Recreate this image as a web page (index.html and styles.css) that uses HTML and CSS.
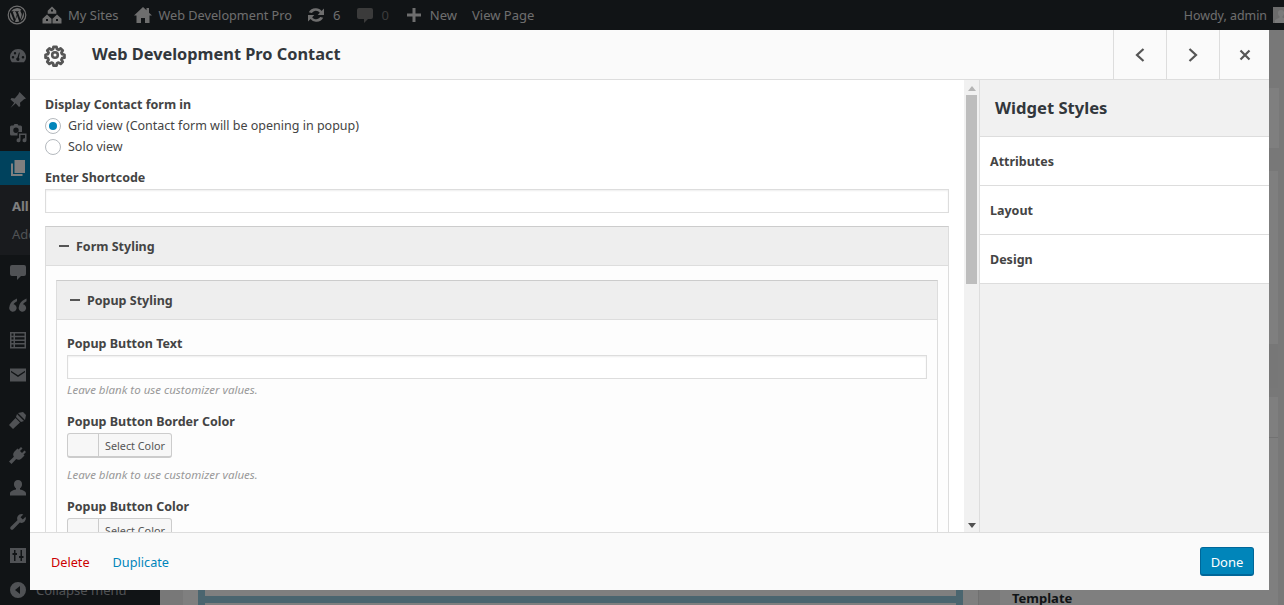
FILE: index.html
```html
<!DOCTYPE html>
<html lang="en">
<head>
<meta charset="utf-8">
<title>Web Development Pro Contact</title>
<link rel="stylesheet" href="styles.css">
</head>
<body>
<header class="adminbar">
  <svg class="ab-wp" viewBox="0 0 20 20"><circle cx="10" cy="10" r="8.800" fill="none" stroke="currentColor" stroke-width="1.200"/><path d="M3 10c0 2.800 1.600 5.200 4 6.300L3.600 7.200A7 7 0 0 0 3 10zm11.700-.3c0-.9-.3-1.500-.6-2-.3-.6-.7-1.100-.7-1.700 0-.6.500-1.200 1.200-1.200h.1A7 7 0 0 0 4.200 6.300h.5c.7 0 1.900-.1 1.900-.1.400 0 .4.500 0 .6 0 0-.4 0-.8.100l2.500 7.400 1.500-4.500-1.100-2.900-.7-.1c-.4 0-.3-.6 0-.6 0 0 1.100.1 1.800.1s1.900-.1 1.900-.1c.4 0 .4.500 0 .6 0 0-.4 0-.8.100l2.500 7.300.7-2.300c.3-.9.5-1.600.5-2.200zM10.100 10.700 8 16.700a7 7 0 0 0 4.300-.1l-.1-.1zm6-3.900c0 .2.100.4.100.7 0 .7-.1 1.500-.5 2.500l-2.100 6.100A7 7 0 0 0 16.100 6.800z" fill="currentColor"/></svg>
  <span class="ab-item ab-sites"><svg class="ab-ic" viewBox="0 0 20 20"><path d="M10 1.500 5.700 5.800v2.900h8.600V5.800zM9 4.500h2v2H9zM5 9.500.5 13.800V18.500h9v-4.700zm10 0-4.500 4.300v4.700h9v-4.700zM4 14h2v2H4zm10 0h2v2h-2z" fill="currentColor" fill-rule="evenodd"/></svg>My Sites</span>
  <span class="ab-item ab-site"><svg class="ab-ic" viewBox="0 0 20 20"><path d="M10 2 1 10.500h2.500V18h4.500v-5h4v5h4.500v-7.500H19L16 7.700V3h-2.500v2.300z" fill="currentColor"/></svg>Web Development Pro</span>
  <span class="ab-item ab-sync"><svg class="ab-ic" viewBox="0 0 20 20"><path d="M10.200 3.300c2.200 0 4.100 1.100 5.300 2.700L18 3.600V10h-6.300l2.100-2.200A4.600 4.600 0 0 0 5.900 8.100L2.800 7.200a7.600 7.600 0 0 1 7.400-3.900zM9.800 16.700A7.300 7.300 0 0 1 4.500 14L2 16.400V10h6.300l-2.100 2.200a4.600 4.600 0 0 0 7.900-.3l3.100.9a7.600 7.600 0 0 1-7.400 3.900z" fill="currentColor"/></svg>6</span>
  <span class="ab-item ab-dim"><svg class="ab-ic" viewBox="0 0 20 20"><path d="M4 3h12a2 2 0 0 1 2 2v7a2 2 0 0 1-2 2h-3l-4 4v-4H4a2 2 0 0 1-2-2V5a2 2 0 0 1 2-2z" fill="currentColor"/></svg>0</span>
  <span class="ab-item"><svg class="ab-ic" viewBox="0 0 20 20"><path d="M8.500 3h3v5.500H17v3h-5.500V17h-3v-5.500H3v-3h5.500z" fill="currentColor"/></svg>New</span>
  <span class="ab-item">View Page</span>
  <span class="ab-howdy">Howdy, admin<svg class="ab-avatar" viewBox="0 0 16 16"><rect x="0" y="0" width="16" height="16" fill="#d8d8d8"/><path d="M8 3a3 3 0 0 1 3 3.300c0 1.500-.8 2.600-1.500 3v1.200L14 13v3H2v-3l4.500-2.500V9.300C5.800 8.900 5 7.800 5 6.300A3 3 0 0 1 8 3z" fill="#f4f4f4"/></svg></span>
</header>

<div class="wpwrap">
  <nav class="sidemenu">
    <svg class="sm-ic sm-dash" viewBox="0 0 20 20"><path d="M10 3a8 8 0 0 0-8 8c0 2 .8 3.900 2 5.300h12A8 8 0 0 0 10 3zM5 12.500a1.300 1.300 0 1 1 0-2.600 1.300 1.300 0 0 1 0 2.600zM7 8.500a1.200 1.200 0 1 1 0-2.400 1.200 1.200 0 0 1 0 2.400zm3 6.500a1.800 1.800 0 0 1-.6-3.500L11 6.500l.8.3-1 5a1.800 1.800 0 0 1-.8 3.200zm5-2.500a1.300 1.300 0 1 1 0-2.600 1.300 1.300 0 0 1 0 2.600z" fill="currentColor" fill-rule="evenodd"/></svg>
    <svg class="sm-ic sm-pin" viewBox="0 0 20 20"><path d="M11.500 2 18 8.500l-2 .8-4 3.500.3 3.200-1.300 1-3.300-3.700L2.500 18l3.700-5.300L2.500 9.400l1-1.300 3.200.3 3.500-4z" fill="currentColor"/></svg>
    <svg class="sm-ic sm-media" viewBox="0 0 20 20"><path d="M3.500 2.500h2l1-1.500h3l1 1.500h2a1.500 1.500 0 0 1 1.500 1.500v5H9.500v3.500h-6A1.500 1.500 0 0 1 2 11V4a1.500 1.500 0 0 1 1.500-1.500zM8 4.500a2.700 2.700 0 1 0 0 5.400 2.700 2.700 0 0 0 0-5.400zM11 10.500h7.500v6.700a2 2 0 1 1-1.500-1.900v-3.300h-4.500v5.200a2 2 0 1 1-1.500-1.900z" fill="currentColor" fill-rule="evenodd"/></svg>
    <div class="sm-current"><svg class="sm-ic" viewBox="0 0 20 20"><path d="M6.500 2H17v13H6.500z" fill="currentColor"/><path d="M3 5.500h2v10.500h9.500v2H3z" fill="currentColor"/></svg></div>
    <div class="sm-sub"><b>All Pages</b><span>Add New</span></div>
    <svg class="sm-ic sm-comment" viewBox="0 0 20 20"><path d="M4 3h12a2 2 0 0 1 2 2v7a2 2 0 0 1-2 2h-3l-4 4v-4H4a2 2 0 0 1-2-2V5a2 2 0 0 1 2-2z" fill="currentColor"/></svg>
    <svg class="sm-ic sm-quote" viewBox="0 0 20 20"><path d="M9 3.500C5 5 2 8 1.500 11.500a3.700 3.700 0 1 0 4-2.200c.5-1 1.800-2.200 3.500-3zm9.500 0c-4 1.500-7 4.500-7.500 8a3.700 3.700 0 1 0 4-2.200c.5-1 1.800-2.200 3.500-3z" fill="currentColor"/></svg>
    <svg class="sm-ic sm-list" viewBox="0 0 20 20"><path d="M2 2h16v16.500H2zm1.500 1.500v2.200h2V3.500zm3.500 0v2.200h9.500V3.500zM3.500 7.200v2.200h2V7.200zm3.500 0v2.200h9.500V7.200zm-3.500 3.700v2.200h2v-2.200zm3.500 0v2.200h9.500v-2.200zm-3.500 3.700V17h2v-2.400zm3.500 0V17h9.500v-2.400z" fill="currentColor" fill-rule="evenodd"/></svg>
    <svg class="sm-ic sm-mail" viewBox="0 0 20 20"><path d="M2 3.500h16v13H2zm1 2.200v1.500l7 4.800 7-4.800V5.700l-7 4.500z" fill="currentColor" fill-rule="evenodd"/></svg>
    <svg class="sm-ic sm-brush" viewBox="0 0 20 20"><path d="M10 3l5-1 3 3-1 5zM9 4l7 7-3 1-5-5zM7.500 8l4.500 4.500L5 19l-4-4z" fill="currentColor"/></svg>
    <svg class="sm-ic sm-plug" viewBox="0 0 20 20"><path d="M13 2l1.500 1.500L12 6l2 2 2.500-2.500L18 7l-2.500 2.500 1 1-3 3c-1.800 1.800-4 1.500-5.300.6L3.500 19 1 16.500l4.900-4.700C5 10.500 4.700 8.300 6.500 6.500l3-3 1 1z" fill="currentColor"/></svg>
    <svg class="sm-ic sm-user" viewBox="0 0 20 20"><path d="M10 2a4 4 0 0 1 4 4.500c0 1.800-1 3.200-2 3.800v1.200c3 .6 6 1.800 6 4v2H2v-2c0-2.200 3-3.400 6-4v-1.200c-1-.6-2-2-2-3.800A4 4 0 0 1 10 2z" fill="currentColor"/></svg>
    <svg class="sm-ic sm-tool" viewBox="0 0 20 20"><path d="M13.500 2a4.500 4.500 0 0 1 1.800.4L12.500 5.200l2.300 2.300 2.800-2.800A4.500 4.500 0 0 1 11.800 10.600L5 17.500a1.800 1.800 0 0 1-2.500-2.500l6.900-6.800A4.500 4.500 0 0 1 13.500 2z" fill="currentColor"/></svg>
    <svg class="sm-ic sm-set" viewBox="0 0 20 20"><path d="M2 3h16v15H2zm4 2v3H4.500v2H6v6h1.500v-6H9V8H7.500V5zm6.500 0v6H11v2h1.500v3H14v-3h1.500v-2H14V5z" fill="currentColor" fill-rule="evenodd"/></svg>
    <div class="sm-collapse"><svg class="sm-ic" viewBox="0 0 20 20"><path d="M10 2a8 8 0 1 1 0 16 8 8 0 0 1 0-16zm2 4-5 4 5 4z" fill="currentColor" fill-rule="evenodd"/></svg><span>Collapse menu</span></div>
  </nav>
  <main class="pagebg">
    <div class="bg-canvas"><div class="bg-frame"><div class="bg-bar"></div></div></div>
    <aside class="bg-side">
      <div class="bg-card bg-card-a"></div>
      <div class="bg-card bg-card-b"></div>
      <div class="bg-strip"></div>
      <div class="bg-card bg-card-c"></div>
      <div class="bg-card bg-card-d">Template</div>
    </aside>
  </main>
</div>
<div class="backdrop"></div>

<section class="modal">
  <header class="m-head">
    <svg class="m-gear" viewBox="0 0 24 24"><path fill="none" stroke="currentColor" stroke-width="3.200" stroke-linejoin="round" d="M10.300 2.500h3.400l.6 2.700 1.800.8 2.400-1.500 2.400 2.400-1.500 2.400.8 1.800 2.700.6v3.400l-2.700.6-.8 1.800 1.500 2.400-2.400 2.400-2.400-1.500-1.800.8-.6 2.700h-3.400l-.6-2.700-1.800-.8-2.400 1.500-2.400-2.400 1.500-2.400-.8-1.800-2.700-.6v-3.400l2.700-.6.800-1.800-1.500-2.400 2.400-2.400 2.400 1.500 1.800-.8z" transform="translate(2.400 2.400) scale(.8)"/><circle cx="12" cy="12" r="2.600" fill="none" stroke="currentColor" stroke-width="2.400"/></svg>
    <h1>Web Development Pro Contact</h1>
    <div class="m-nav">
      <button class="m-btn"><svg viewBox="0 0 12 16"><path d="M9.500 2 3 8l6.500 6" fill="none" stroke="currentColor" stroke-width="2.200"/></svg></button>
      <button class="m-btn"><svg viewBox="0 0 12 16"><path d="M2.500 2 9 8l-6.500 6" fill="none" stroke="currentColor" stroke-width="2.200"/></svg></button>
      <button class="m-btn m-close"><svg viewBox="0 0 12 16"><path d="m1.500 3.500 9 9m0-9-9 9" fill="none" stroke="currentColor" stroke-width="2.200"/></svg></button>
    </div>
  </header>
  <div class="m-body">
    <div class="m-form">
      <div class="m-scroll">
        <label class="f-label f-first">Display Contact form in</label>
        <div class="radio on"><i></i>Grid view (Contact form will be opening in popup)</div>
        <div class="radio"><i></i>Solo view</div>
        <label class="f-label f-short">Enter Shortcode</label>
        <div class="input"></div>
        <div class="section">
          <div class="sec-head"><i></i>Form Styling</div>
          <div class="sec-body">
            <div class="section inner">
              <div class="sec-head"><i></i>Popup Styling</div>
              <div class="sec-body2">
                <label class="f-label">Popup Button Text</label>
                <div class="input"></div>
                <p class="hint">Leave blank to use customizer values.</p>
                <label class="f-label">Popup Button Border Color</label>
                <div class="color"><i></i><span>Select Color</span></div>
                <p class="hint">Leave blank to use customizer values.</p>
                <label class="f-label">Popup Button Color</label>
                <div class="color"><i></i><span>Select Color</span></div>
              </div>
            </div>
          </div>
        </div>
      </div>
      <div class="scrollbar"><i class="arr up"></i><b></b><i class="arr down"></i></div>
    </div>
    <aside class="m-side">
      <h2>Widget Styles</h2>
      <div class="acc">Attributes</div>
      <div class="acc">Layout</div>
      <div class="acc">Design</div>
    </aside>
  </div>
  <footer class="m-foot">
    <a class="del">Delete</a>
    <a class="dup">Duplicate</a>
    <button class="done">Done</button>
  </footer>
</section>
</body>
</html>
```
FILE: styles.css
```css
* { box-sizing: border-box; }
html, body { margin: 0; height: 605px; overflow: hidden; }
body { font-family: "Noto Sans", "Open Sans", sans-serif; font-size: 12.500px; color: #444; background: #f1f1f1; }

.adminbar { height: 30px; background: #23282d; color: #dcdcdc; display: flex; align-items: center; padding-left: 7px; font-size: 13px; overflow: hidden; }
.ab-wp { width: 20px; height: 20px; margin-right: 15px; flex: none; }
.ab-item { display: flex; align-items: center; margin-right: 15px; white-space: nowrap; }
.ab-sites { margin-right: 14px; }
.ab-site { font-size: 12.700px; margin-right: 14px; }
.ab-dim { color: #777; }
.ab-ic { width: 20px; height: 20px; margin-right: 6px; flex: none; }
.ab-sync .ab-ic { margin-right: 7px; }
.ab-howdy { margin-left: auto; display: flex; align-items: center; gap: 6px; font-size: 12.400px; margin-right: -5px; }
.ab-avatar { width: 16px; height: 16px; display: block; flex: none; }

.wpwrap { display: flex; height: 575px; }
.sidemenu { width: 160px; background: #23282d; color: #a0a5aa; display: flex; flex-direction: column; flex: none; font-size: 13px; }
.sm-ic { width: 20px; height: 20px; display: block; margin-left: 8px; flex: none; }
.sm-dash { margin-top: 16px; }
.sm-pin { margin-top: 24px; }
.sm-media { margin-top: 13px; }
.sm-current { background: #0085ba; height: 34px; margin-top: 8px; color: #fff; display: flex; align-items: center; }
.sm-sub { background: #32373c; height: 70px; padding: 12px 12px; display: flex; flex-direction: column; gap: 10px; }
.sm-sub b { color: #fff; }
.sm-comment { margin-top: 7px; }
.sm-quote { margin-top: 13px; }
.sm-list { margin-top: 15px; }
.sm-mail { margin-top: 15px; }
.sm-brush { margin-top: 25px; }
.sm-plug { margin-top: 15px; }
.sm-user { margin-top: 13px; }
.sm-tool { margin-top: 14px; }
.sm-set { margin-top: 13px; }
.sm-collapse { margin-top: 15px; display: flex; align-items: center; gap: 8px; }

.pagebg { flex: 1; display: flex; }
.bg-canvas { width: 796px; margin-left: 23px; padding: 0 15px; background: #fff; border-right: 1px solid #e0e0e0; height: 100%; }
.bg-frame { height: 100%; border: solid #94cadf; border-width: 0 7px; padding-top: 566px; }
.bg-bar { height: 7px; background: #94cadf; }
.bg-side { margin-left: 21px; width: 278px; display: flex; flex-direction: column; height: 100%; }
.bg-card { background: #fff; flex: none; }
.bg-card-a { height: 60px; margin-top: 58px; width: 279px; }
.bg-card-b { height: 173px; margin-top: 23px; }
.bg-strip { height: 44px; background: #eee; flex: none; }
.bg-card-c { height: 40px; margin-top: 9px; }
.bg-card-d { flex: 1; font-weight: 700; color: #23282d; font-size: 13px; padding: 151px 0 0 12px; border-top: 1px solid #e5e5e5; }

.backdrop { position: absolute; inset: 0; background: rgba(0,0,0,.5); }

.modal { position: absolute; left: 30px; top: 30px; width: 1239px; height: 560px; background: #fff; display: flex; flex-direction: column; color: #444; }
.m-head { height: 50px; background: #fafafa; border-bottom: 1px solid #ddd; display: flex; align-items: center; flex: none; }
.m-gear { width: 26px; height: 26px; margin-left: 12px; color: #555; }
.m-head h1 { font-size: 16.330px; font-weight: 700; color: #32373c; margin: 0 0 2px 24px; }
.m-nav { margin-left: auto; display: flex; height: 100%; }
.m-btn { width: 53px; padding: 0; border: 0; border-left: 1px solid #ddd; background: transparent; color: #555; display: flex; align-items: center; justify-content: center; }
.m-btn svg { width: 12px; height: 16px; }
.m-close { width: 50px; }
.m-body { flex: 1; display: flex; min-height: 0; }
.m-form { width: 949px; display: flex; overflow: hidden; background: #fff; flex: none; }
.m-scroll { width: 934px; padding: 0 15px; overflow: hidden; flex: none; }
.scrollbar { width: 15px; background: #f1f1f1; display: flex; flex-direction: column; align-items: center; position: relative; }
.scrollbar b { display: block; width: 11px; height: 189px; background: #bdbdbd; margin-top: 4px; }
.arr { display: block; width: 0; height: 0; border-left: 4px solid transparent; border-right: 4px solid transparent; }
.arr.up { border-bottom: 5px solid #b5b5b5; margin-top: 6px; }
.arr.down { border-top: 5px solid #505050; position: absolute; bottom: 4px; }
.m-side { flex: 1; background: #f1f1f1; border-left: 1px solid #ddd; }
.m-side h2 { margin: 0; height: 56px; padding-left: 15px; font-size: 16.600px; font-weight: 700; line-height: 56px; color: #32373c; }
.acc { height: 49px; line-height: 49px; background: #fff; border-top: 1px solid #ddd; font-weight: 700; padding-left: 10px; font-size: 12.500px; color: #444; }
.acc:last-child { height: 50px; border-bottom: 1px solid #ddd; }
.m-foot { height: 58px; flex: none; background: #fafafa; border-top: 1px solid #ddd; display: flex; align-items: center; padding: 0 15px 0 21px; font-size: 12.700px; }
.del { color: #c00; margin-right: 23px; }
.dup { color: #0085ba; }
.done { margin-left: auto; width: 54px; height: 29px; background: #0085ba; border: 1px solid #006799; border-bottom-width: 2px; border-radius: 3px; color: #fff; font: 13px "Noto Sans", sans-serif; padding: 1px 0 0; }

.f-label { display: block; font-weight: 700; font-size: 12.500px; color: #444; line-height: 17px; margin-bottom: 3px; }
.f-first { margin-top: 16px; margin-bottom: 2px; }
.f-short { margin-top: 12px; }
.radio { display: flex; align-items: center; height: 21px; }
.radio i { width: 16px; height: 16px; border: 1px solid #b4b9be; border-radius: 50%; background: #fff; margin-right: 7px; position: relative; flex: none; }
.radio.on i::after { content: ""; position: absolute; left: 3px; top: 3px; width: 8px; height: 8px; border-radius: 50%; background: #0085ba; }
.input { height: 24px; background: #fff; border: 1px solid #ddd; box-shadow: inset 0 1px 2px rgba(0,0,0,.07); }
.section { margin-top: 13px; border: 1px solid #ddd; border-top-color: #ccc; background: #fdfdfd; }
.sec-head { height: 39px; background: #eee; border-bottom: 1px solid #ddd; display: flex; align-items: center; padding-left: 13px; font-weight: 700; font-size: 12.500px; color: #444; }
.sec-head i { width: 10px; height: 2px; background: #555; margin-right: 7px; }
.sec-body { padding: 14px 10px 40px; height: 400px; }
.section.inner { margin-top: 0; }
.sec-body2 { padding: 15px 10px; }
.hint { margin: 3px 0 16px; font-size: 11.500px; font-style: italic; color: #999; line-height: 15px; }
.color + .hint { margin-top: 9px; }
.color { width: 105px; height: 25px; display: flex; border: 1px solid #ccc; border-bottom-width: 2px; border-radius: 3px; background: #f7f7f7; font-size: 10.800px; align-items: center; color: #555; }
.color i { width: 31px; height: 100%; border-right: 1px solid #ccc; flex: none; }
.color span { padding-left: 6px; white-space: nowrap; }
```
